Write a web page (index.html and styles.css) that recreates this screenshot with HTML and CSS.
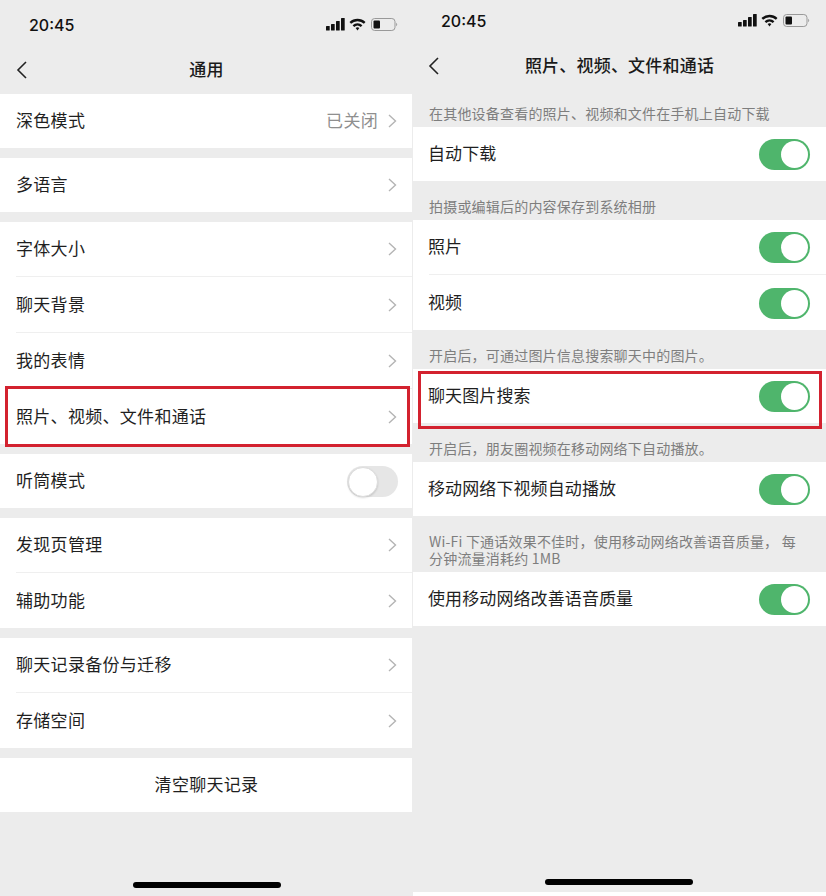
FILE: index.html
```html
<!DOCTYPE html>
<html lang="zh-CN">
<head>
  <meta charset="UTF-8" />
  <title>通用</title>
  <link rel="stylesheet" href="styles.css">
</head>
<body>
  <div class="screens">

    <div class="phone phone-left">
      <div class="status">
        <span class="time">20:45</span>
        <svg class="status-icons" width="72" height="16" viewBox="0 0 72 16">
          <rect x="0" y="9" width="3.7" height="4.5" rx="0.6"/>
          <rect x="5" y="7" width="3.7" height="6.5" rx="0.6"/>
          <rect x="10" y="4" width="3.7" height="9.5" rx="0.6"/>
          <rect x="15" y="1" width="3.7" height="12.5" rx="0.6"/>
          <path d="M23.5 5a11.5 11.5 0 0 1 16 0l-1.6 1.8a9 9 0 0 0-12.8 0z"/>
          <path d="M26.6 8.2a7.4 7.4 0 0 1 9.8 0l-1.6 1.8a4.8 4.8 0 0 0-6.6 0z"/>
          <path d="M29.6 11a3.2 3.2 0 0 1 3.8 0l-1.9 2.4z"/>
          <rect class="batt" x="45.5" y="1.5" width="23.5" height="12" rx="3.2"/>
          <rect x="47.5" y="3.5" width="6.5" height="8" rx="1"/>
          <path class="batt-tip" d="M70.2 5.8a2 2 0 0 1 0 3.4z"/>
        </svg>
      </div>
      <div class="nav">
        <svg class="back" width="12" height="18" viewBox="0 0 12 18"><path d="M10 1 2 9l8 8"/></svg>
        <span class="nav-title">通用</span>
      </div>

      <div class="group">
        <div class="row"><span class="label">深色模式</span><span class="value">已关闭</span><svg class="chevron" width="9" height="14" viewBox="0 0 9 14"><path d="M1 1l6.5 6L1 13"/></svg></div>
      </div>
      <div class="group">
        <div class="row"><span class="label">多语言</span><svg class="chevron" width="9" height="14" viewBox="0 0 9 14"><path d="M1 1l6.5 6L1 13"/></svg></div>
      </div>
      <div class="group">
        <div class="row"><span class="label">字体大小</span><svg class="chevron" width="9" height="14" viewBox="0 0 9 14"><path d="M1 1l6.5 6L1 13"/></svg></div>
        <div class="row"><span class="label">聊天背景</span><svg class="chevron" width="9" height="14" viewBox="0 0 9 14"><path d="M1 1l6.5 6L1 13"/></svg></div>
        <div class="row"><span class="label">我的表情</span><svg class="chevron" width="9" height="14" viewBox="0 0 9 14"><path d="M1 1l6.5 6L1 13"/></svg></div>
        <div class="row"><span class="label">照片、视频、文件和通话</span><svg class="chevron" width="9" height="14" viewBox="0 0 9 14"><path d="M1 1l6.5 6L1 13"/></svg></div>
      </div>
      <div class="group">
        <div class="row"><span class="label">听筒模式</span><span class="toggle off"></span></div>
      </div>
      <div class="group">
        <div class="row"><span class="label">发现页管理</span><svg class="chevron" width="9" height="14" viewBox="0 0 9 14"><path d="M1 1l6.5 6L1 13"/></svg></div>
        <div class="row"><span class="label">辅助功能</span><svg class="chevron" width="9" height="14" viewBox="0 0 9 14"><path d="M1 1l6.5 6L1 13"/></svg></div>
      </div>
      <div class="group">
        <div class="row"><span class="label">聊天记录备份与迁移</span><svg class="chevron" width="9" height="14" viewBox="0 0 9 14"><path d="M1 1l6.5 6L1 13"/></svg></div>
        <div class="row"><span class="label">存储空间</span><svg class="chevron" width="9" height="14" viewBox="0 0 9 14"><path d="M1 1l6.5 6L1 13"/></svg></div>
      </div>
      <div class="group">
        <div class="row row-center"><span class="label">清空聊天记录</span></div>
      </div>

      <div class="home-bar"></div>
      <div class="callout"></div>
    </div>

    <div class="phone phone-right">
      <div class="status">
        <span class="time">20:45</span>
        <svg class="status-icons" width="72" height="16" viewBox="0 0 72 16">
          <rect x="0" y="9" width="3.7" height="4.5" rx="0.6"/>
          <rect x="5" y="7" width="3.7" height="6.5" rx="0.6"/>
          <rect x="10" y="4" width="3.7" height="9.5" rx="0.6"/>
          <rect x="15" y="1" width="3.7" height="12.5" rx="0.6"/>
          <path d="M23.5 5a11.5 11.5 0 0 1 16 0l-1.6 1.8a9 9 0 0 0-12.8 0z"/>
          <path d="M26.6 8.2a7.4 7.4 0 0 1 9.8 0l-1.6 1.8a4.8 4.8 0 0 0-6.6 0z"/>
          <path d="M29.6 11a3.2 3.2 0 0 1 3.8 0l-1.9 2.4z"/>
          <rect class="batt" x="45.5" y="1.5" width="23.5" height="12" rx="3.2"/>
          <rect x="47.5" y="3.5" width="6.5" height="8" rx="1"/>
          <path class="batt-tip" d="M70.2 5.8a2 2 0 0 1 0 3.4z"/>
        </svg>
      </div>
      <div class="nav">
        <svg class="back" width="12" height="18" viewBox="0 0 12 18"><path d="M10 1 2 9l8 8"/></svg>
        <span class="nav-title">照片、视频、文件和通话</span>
      </div>

      <p class="caption first">在其他设备查看的照片、视频和文件在手机上自动下载</p>
      <div class="group">
        <div class="row"><span class="label">自动下载</span><span class="toggle"></span></div>
      </div>
      <p class="caption">拍摄或编辑后的内容保存到系统相册</p>
      <div class="group">
        <div class="row"><span class="label">照片</span><span class="toggle"></span></div>
        <div class="row"><span class="label">视频</span><span class="toggle"></span></div>
      </div>
      <p class="caption">开启后，可通过图片信息搜索聊天中的图片。</p>
      <div class="group">
        <div class="row"><span class="label">聊天图片搜索</span><span class="toggle"></span></div>
      </div>
      <p class="caption">开启后，朋友圈视频在移动网络下自动播放。</p>
      <div class="group">
        <div class="row"><span class="label">移动网络下视频自动播放</span><span class="toggle"></span></div>
      </div>
      <p class="caption">Wi-Fi 下通话效果不佳时，使用移动网络改善语音质量， 每分钟流量消耗约 1MB</p>
      <div class="group">
        <div class="row"><span class="label">使用移动网络改善语音质量</span><span class="toggle"></span></div>
      </div>

      <div class="home-bar"></div>
      <div class="callout"></div>
    </div>

  </div>
</body>
</html>
```

FILE: styles.css
```css
body {
  margin: 0;
  background: #fff;
  font-family: "Noto Sans CJK SC", "Liberation Sans", sans-serif;
  color: #1c1c1c;
}
.screens {
  display: flex;
  height: 896px;
  overflow: hidden;
}
.phone {
  position: relative;
  width: 413px;
  height: 896px;
  background: #ececec;
}
.phone-right {
  height: 892px;
}

/* top of each phone */
.status {
  display: flex;
  align-items: center;
  justify-content: space-between;
  height: 50px;
  padding: 0 15px 0 29px;
}
.phone-right .status {
  height: 41px;
  padding: 0 16px 0 28px;
}
.time {
  font-family: Inter, "Liberation Sans", sans-serif;
  font-size: 16px;
  font-weight: 500;
  color: #111;
}
.status-icons rect,
.status-icons path {
  fill: #111;
}
.status-icons .batt {
  fill: none;
  stroke: #999;
  stroke-width: 1;
}
.status-icons .batt-tip {
  fill: #999;
}
.nav {
  position: relative;
  display: flex;
  align-items: center;
  justify-content: center;
  height: 44px;
}
.phone-right .nav {
  height: 54px;
}
.nav-title {
  padding-bottom: 8px;
  font-size: 17px;
  font-weight: 500;
  letter-spacing: 0.2px;
  color: #1a1a1a;
}
.back {
  position: absolute;
  left: 16px;
  top: 50%;
  margin-top: -11px;
}
.phone-right .back {
  left: 15px;
}
.back path {
  fill: none;
  stroke: #222;
  stroke-width: 1.6;
}

/* list rows */
.group {
  background: #fff;
  margin-bottom: 10px;
}
.phone-left .group {
  margin-right: 1px;
}
.row {
  display: flex;
  align-items: center;
  height: 54px;
  padding: 0 15px 0 16px;
}
.row + .row {
  margin-top: 2px;
  position: relative;
}
.row + .row::before {
  content: "";
  position: absolute;
  left: 16px;
  right: 0;
  top: -2px;
  height: 1px;
  background: #efefef;
}
.label {
  flex: 1;
  padding-bottom: 4px;
  font-size: 17px;
  letter-spacing: 0.3px;
  color: #1f1f1f;
}
.row-center {
  justify-content: center;
}
.row-center .label {
  flex: none;
}
.value {
  padding-bottom: 4px;
  font-size: 17px;
  letter-spacing: 0.3px;
  color: #8f8f8f;
  margin-right: 10px;
}
.chevron path {
  fill: none;
  stroke: #b4b4b4;
  stroke-width: 1.4;
}

/* switches */
.toggle {
  position: relative;
  width: 51px;
  height: 31px;
  border-radius: 16px;
  background: #4fb56c;
}
.toggle::after {
  content: "";
  position: absolute;
  right: 2px;
  top: 2px;
  width: 27px;
  height: 27px;
  border-radius: 50%;
  background: #fff;
}
.toggle.off {
  margin-right: -1px;
  background: #e6e6e6;
}
.toggle.off::after {
  right: auto;
  left: 1px;
  top: 1px;
  width: 28px;
  height: 28px;
  border: 1px solid #ddd;
  box-shadow: 0 1px 2px rgba(0, 0, 0, 0.15);
}
.phone-right .row {
  padding: 0 16px 0 15px;
}
.phone-right .label {
  letter-spacing: 0.1px;
}
.phone-right .group {
  margin-bottom: 0;
}

/* grey text between groups */
.caption {
  margin: 0;
  padding: 17px 28px 5px 16px;
  font-size: 14px;
  line-height: 17px;
  letter-spacing: 0.2px;
  color: #7e7e7e;
}
.caption.first {
  padding-top: 10px;
}

.home-bar {
  position: absolute;
  left: 133px;
  top: 882px;
  width: 148px;
  height: 6px;
  border-radius: 3px;
  background: #000;
}
.phone-right .home-bar {
  left: 132px;
  top: 879px;
}
.callout {
  position: absolute;
  left: 5px;
  top: 386px;
  width: 399px;
  height: 55px;
  border: 3px solid #d3222f;
}
.phone-right .callout {
  top: 371px;
  width: 398px;
  height: 52px;
}
```
